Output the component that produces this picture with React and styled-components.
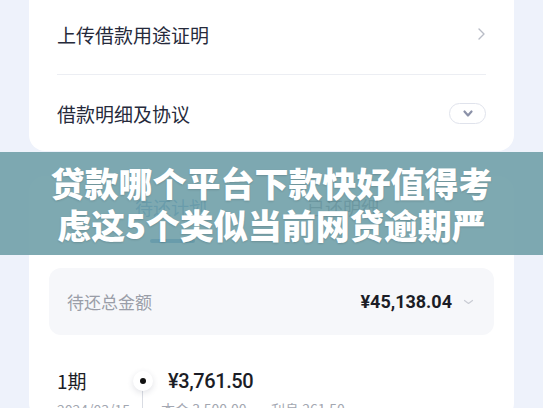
import React from "react";
import styled, { createGlobalStyle } from "styled-components";

const GlobalStyle = createGlobalStyle`
    html, body {
        margin: 0;
        padding: 0;
        background: #eef2fb;
    }
    body {
        font-family: "Noto Sans CJK SC", "Noto Sans", sans-serif;
    }
`;

const Page = styled.div`
    position: relative;
    width: 543px;
    height: 408px;
    overflow: hidden;
    background: #eef2fb;
    padding: 0 29px;
    box-sizing: border-box;
    display: flex;
    flex-direction: column;
`;

const Card = styled.div`
    background: #ffffff;
    border-radius: 16px;
    padding: 0 28px;
    flex-shrink: 0;
`;

const TopCard = styled(Card)`
    margin-top: -26px;
    padding-top: 20px;
`;

const Row = styled.div`
    display: flex;
    align-items: center;
    justify-content: space-between;
    height: ${(p) => p.$h}px;
    border-bottom: ${(p) => (p.$line ? "1px solid #eceef3" : "none")};
    font-size: 19px;
    color: #262a3b;
`;

const PillButton = styled.div`
    width: 35px;
    height: 19px;
    border: 1px solid #e0e3ec;
    border-radius: 11px;
    display: flex;
    align-items: center;
    justify-content: center;
`;

const PlanCard = styled(Card)`
    margin-top: 25px;
    padding: 0 20px;
    flex-grow: 1;
`;

const Tabs = styled.div`
    display: flex;
    height: 70px;
    padding: 0 0 0 86px;
    gap: 100px;
`;

const Tab = styled.div`
    position: relative;
    font-size: 18px;
    padding-top: 18px;
    color: ${(p) => (p.$active ? "#2b7dc2" : "#4c505c")};
`;

const TabLine = styled.div`
    position: absolute;
    left: 15px;
    top: 63px;
    width: 45px;
    height: 4px;
    border-radius: 2px;
    background: #2b7dc2;
`;

const TotalBox = styled.div`
    margin-top: 22px;
    height: 67px;
    border-radius: 12px;
    background: #f6f7fa;
    display: flex;
    align-items: center;
    justify-content: space-between;
    padding: 0 20px 0 18px;
`;

const TotalLabel = styled.span`
    font-size: 17px;
    color: #9a9ea8;
`;

const TotalRight = styled.div`
    display: flex;
    align-items: center;
    gap: 11px;
`;

const Amount = styled.span`
    font-family: Roboto, "Noto Sans", sans-serif;
    font-size: ${(p) => p.$size}px;
    font-weight: ${(p) => p.$weight};
    letter-spacing: ${(p) => p.$ls || 0}px;
    color: #1b1d26;
    padding-left: ${(p) => p.$pl || 0}px;
`;

const Timeline = styled.div`
    margin-top: 32px;
    display: grid;
    grid-template-columns: 72px 28px 1fr;
    column-gap: 8px;
    align-items: center;
`;

const Period = styled.span`
    font-size: 19px;
    color: #1b1d26;
    padding-left: 8px;
`;

const DotWrap = styled.div`
    position: relative;
    height: 26px;
    display: flex;
    justify-content: center;
    align-items: center;
`;

const Dot = styled.div`
    width: 20px;
    height: 20px;
    border-radius: 50%;
    background: #fff;
    box-shadow: 0 2px 6px rgba(40, 50, 80, 0.14);
    display: flex;
    align-items: center;
    justify-content: center;
    z-index: 1;
    &::after {
        content: "";
        width: 6px;
        height: 6px;
        border-radius: 50%;
        background: #111;
    }
`;

const VLine = styled.div`
    position: absolute;
    left: 13px;
    top: 22px;
    width: 1px;
    height: 60px;
    background: #d9dce3;
`;

const SubText = styled.span`
    font-size: 14px;
    color: #a3a7b1;
    padding-left: ${(p) => p.$pl || 0}px;
`;

const SubRow = styled.div`
    grid-column: 1 / -1;
    display: grid;
    grid-template-columns: 112px 110px 1fr;
    margin-top: 5px;
`;

const Banner = styled.div`
    position: absolute;
    left: 0;
    right: 0;
    top: 152px;
    height: 103px;
    background: rgba(112, 160, 168, 0.9);
    display: flex;
    align-items: center;
    justify-content: center;
    text-align: center;
    color: #fff;
    font-family: "Noto Sans CJK SC", sans-serif;
    font-weight: 900;
    font-size: 34px;
    line-height: 42px;
    text-shadow: 0 1px 2px rgba(0, 0, 0, 0.15);
`;

function ChevronRight() {
    return (
        <svg width="10" height="14" viewBox="0 0 10 14">
            <polyline points="3,2 8,7 3,12" fill="none" stroke="#b8bcc6" strokeWidth="1.4" strokeLinecap="round" strokeLinejoin="round" />
        </svg>
    );
}

function ChevronDown({ color = "#8b91a8", w = 12, h = 8, sw = 2.2 }) {
    return (
        <svg width={w} height={h} viewBox={`0 0 ${w} ${h}`}>
            <polyline
                points={`1.5,1.5 ${w / 2},${h - 1.5} ${w - 1.5},1.5`}
                fill="none"
                stroke={color}
                strokeWidth={sw}
                strokeLinecap="round"
                strokeLinejoin="round"
            />
        </svg>
    );
}

export default function App() {
    return (
        <>
            <GlobalStyle />
            <Page>
                <TopCard>
                    <Row $h={80} $line>
                        <span>上传借款用途证明</span>
                        <ChevronRight />
                    </Row>
                    <Row $h={76}>
                        <span>借款明细及协议</span>
                        <PillButton>
                            <ChevronDown w={10} h={7} sw={2.2} />
                        </PillButton>
                    </Row>
                </TopCard>

                <PlanCard>
                    <Tabs>
                        <Tab $active>
                            待还计划
                            <TabLine />
                        </Tab>
                        <Tab>已还明细</Tab>
                    </Tabs>
                    <TotalBox>
                        <TotalLabel>待还总金额</TotalLabel>
                        <TotalRight>
                            <Amount $size={18} $weight={700}>¥45,138.04</Amount>
                            <ChevronDown color="#c9ccd4" w={11} h={6} sw={1.2} />
                        </TotalRight>
                    </TotalBox>
                    <Timeline>
                        <Period>1期</Period>
                        <DotWrap>
                            <Dot />
                            <VLine />
                        </DotWrap>
                        <Amount $size={20} $weight={500} $pl={3} $ls={-0.4}>¥3,761.50</Amount>
                        <SubRow>
                            <SubText $pl={8}>2024/03/15</SubText>
                            <SubText>本金 3,500.00</SubText>
                            <SubText>利息 261.50</SubText>
                        </SubRow>
                    </Timeline>
                </PlanCard>

                <Banner>
                    贷款哪个平台下款快好值得考
                    <br />
                    虑这5个类似当前网贷逾期严
                </Banner>
            </Page>
        </>
    );
}
